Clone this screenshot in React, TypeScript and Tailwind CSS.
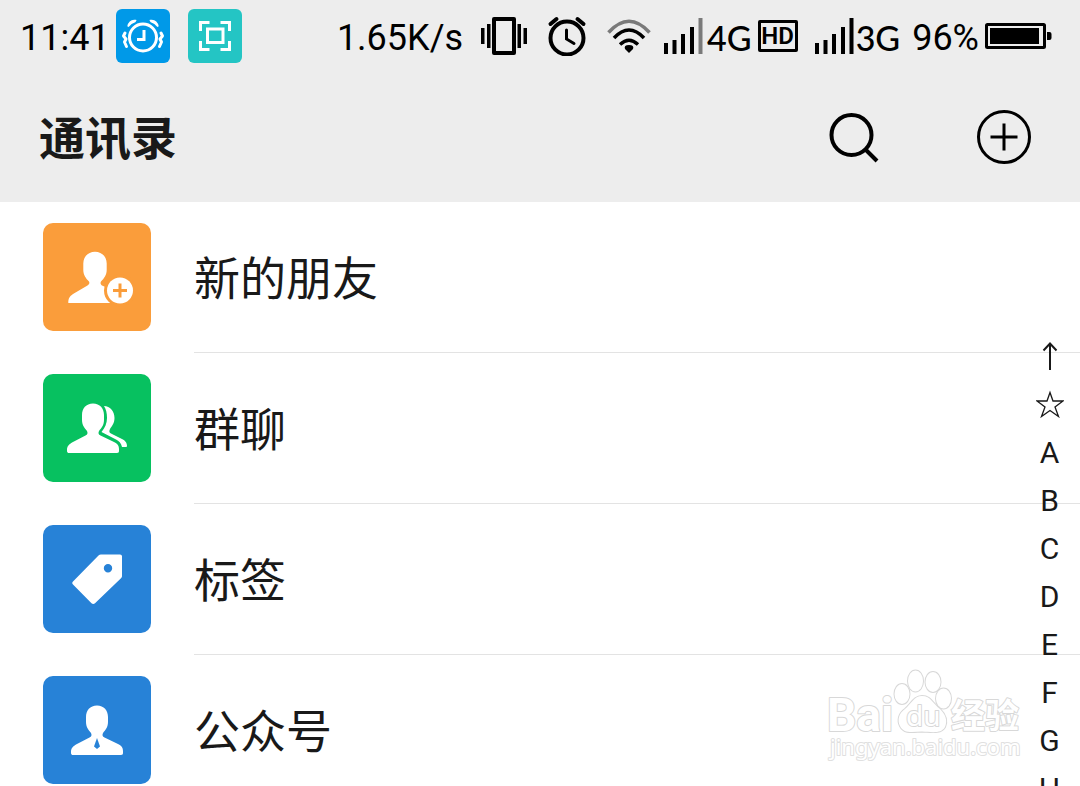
import type { ReactNode } from "react";

const iconSize = "size-[108px]";

function NewFriendIcon() {
  return (
    <svg viewBox="0 0 108 108" className={iconSize} fill="none" aria-hidden="true">
      <path
        fill="#fff"
        d="M52 28.700C45 28.700 40.300 34 40.300 40.500V47C40.300 52 43 55.500 46 58.500C46.800 60 46.300 61.500 44.500 62.500L30 71C26.500 73.500 25.300 75.500 25.300 80H67V66L59 62.500C57.500 61.500 57.200 60 58 58.500C61 55.500 63.700 52 63.700 47V40.500C63.700 34 59 28.700 52 28.700Z"
      />
      <path fill="#fff" d="M58 72h9v8h-9z" />
      <circle cx="77" cy="67.500" r="16" fill="#fa9d3b" />
      <circle cx="77" cy="67.500" r="13" fill="#fff" />
      <path stroke="#fa9d3b" strokeWidth="3" d="M70 67.500h14M77 60.500v14" />
    </svg>
  );
}

function GroupIcon() {
  return (
    <svg viewBox="0 0 108 108" className={iconSize} aria-hidden="true">
      <path
        fill="#fff"
        d="M61 32C67 32 71.500 37 71.500 44C71.500 49 69 52 67 55C66 57 66 58.500 68 59.500L79 65C83 67 84 69.500 84 72C84 73 83 73 82 73H79C78 69 76 67 73 65.500L58.500 58C62 54 64 49 64 44C64 39 63 35 61 32Z"
      />
      <path
        fill="#fff"
        d="M50 29.500C43 29.500 39 34.500 39 41V46C39 51 41.500 54 44 57C45 59 44.500 60.500 42.500 61.500L29 68.500C25 71 24 73 24 76V77C24 78.500 25 79 26 79H74C75.500 79 76 78 76 77V75C76 72 75 70 71 68L57.500 61.500C55.500 60.500 55 59 56 57C58.500 54 61 51 61 46V41C61 34.500 57 29.500 50 29.500Z"
      />
    </svg>
  );
}

function TagIcon() {
  return (
    <svg viewBox="0 0 108 108" className={iconSize} aria-hidden="true">
      <path
        fill="#fff"
        fillRule="evenodd"
        d="M58 29.500H77C78.200 29.500 79 30.300 79 31.500V51C79 52 78.600 52.600 78 53.200L52 78.200C51 79.200 49.500 79.200 48.500 78.200L30 59.500C29 58.500 29 57.500 30 56.500L55.500 30.500C56.200 29.800 57 29.500 58 29.500ZM65 39A4.200 4.200 0 1 0 65 47.400A4.200 4.200 0 1 0 65 39Z"
      />
    </svg>
  );
}

function OfficialIcon() {
  return (
    <svg viewBox="0 0 108 108" className={iconSize} aria-hidden="true">
      <path
        fill="#fff"
        d="M54 29.500C47 29.500 43 34.500 43 41V46C43 51 45.500 54 48 57C49 59 48.500 60.500 46.500 61.500L33 68.500C29 71 28 73 28 76V77C28 78.500 29 79 30 79H78C79.500 79 80 78 80 77V75C80 72 79 70 75 68L61.500 61.500C59.500 60.500 59 59 60 57C62.500 54 65 51 65 46V41C65 34.500 61 29.500 54 29.500Z"
      />
      <path fill="#2782d7" d="M54 62L51 70.500L54 73L57 70.500Z" />
    </svg>
  );
}

const entries: { label: string; color: string; icon: ReactNode }[] = [
  { label: "新的朋友", color: "bg-[#fa9d3b]", icon: <NewFriendIcon /> },
  { label: "群聊", color: "bg-[#07c160]", icon: <GroupIcon /> },
  { label: "标签", color: "bg-[#2782d7]", icon: <TagIcon /> },
  { label: "公众号", color: "bg-[#2782d7]", icon: <OfficialIcon /> },
];

const letters = ["A", "B", "C", "D", "E", "F", "G", "H"];

function SignalBars({ weak = false }: { weak?: boolean }) {
  return (
    <svg viewBox="0 0 40 36" className="h-9 w-10" aria-hidden="true">
      <path d="M1 25h4v11h-4zM9.500 22h4v14h-4zM18 16h4v20h-4zM27 9h4v27h-4z" />
      <path d="M35.500 0h4v36h-4z" fill={weak ? "#7a7a7a" : "#000"} />
    </svg>
  );
}

function StatusBar() {
  return (
    <div className="flex h-[72px] items-center justify-between pr-7 pl-5 text-[36px] leading-none whitespace-nowrap text-black">
      <div className="flex items-center">
        <time className="pt-1">11:41</time>
        <svg viewBox="0 0 54 54" className="ml-1.5 size-[54px] rounded-md bg-[#0099e8]" fill="none" stroke="#fff" strokeLinecap="round" aria-hidden="true">
          <circle cx="27" cy="28.500" r="13.500" strokeWidth="3" />
          <path strokeWidth="3" strokeLinecap="square" d="M28 22.500v8h-5.500" />
          <path fill="#fff" strokeWidth="1.500" d="M12 17.500C13 13 16 11 19.500 11.500L19 12.500C16 13.500 14 15 12 17.500ZM42 17.500C41 13 38 11 34.500 11.500L35 12.500C38 13.500 40 15 42 17.500Z" />
          <path strokeWidth="3" strokeLinejoin="round" d="M9 24l-1.500 3 2.500 3-1.500 3 2 4.500M45 24l1.500 3-2.500 3 1.500 3-2 4.500" />
        </svg>
        <svg viewBox="0 0 54 54" className="ml-[18px] size-[54px] rounded-md bg-[#24c5c4]" fill="none" stroke="#fff" strokeWidth="3" aria-hidden="true">
          <path d="M12.500 22v-8.500h9M32.500 13.500h9v8.500M41.500 32v8.500h-9M21.500 40.500h-9v-8.500" />
          <path d="M19.500 20h15.500v13.500h-15.500z" />
        </svg>
      </div>

      <div className="flex items-center">
        <span className="pt-1">1.65K/s</span>
        <svg viewBox="0 0 46 40" className="ml-[18px] h-10 w-[46px]" aria-hidden="true">
          <path d="M0 12h3.500v16h-3.500zM6 8h3.500v24h-3.500zM36.500 8h3.500v24h-3.500zM42.500 12h3.500v16h-3.500z" />
          <rect x="13" y="3" width="20" height="34" fill="none" stroke="#000" strokeWidth="4" strokeLinejoin="round" />
        </svg>
        <svg viewBox="0 0 40 40" className="ml-5 size-10" fill="none" stroke="#000" strokeWidth="4" strokeLinecap="round" aria-hidden="true">
          <circle cx="20" cy="22" r="16.500" />
          <path strokeWidth="3" d="M19.500 14v9l7.500 4.500" />
          <path d="M3.500 8l6-5M36.500 8l-6-5" />
        </svg>
        <svg viewBox="0 0 44 36" className="ml-5 h-9 w-11" fill="none" stroke="#000" strokeWidth="3.500" aria-hidden="true">
          <path stroke="#7a7a7a" d="M1.500 14.500Q22 -8 42.500 14.500" />
          <path d="M7 20Q22 4 37 20M13 26.500Q22 18 31 26.500" />
          <path fill="#000" stroke="none" d="M22 35l-4-4q-1.500-4 4-4t4 4z" />
        </svg>
        <div className="ml-3">
          <SignalBars weak />
        </div>
        <span className="ml-1 pt-1 font-['Lato',sans-serif] text-[34px] font-medium">4G</span>
        <span className="ml-1.5 flex h-8 w-10 items-center justify-center rounded-xs border-[3px] border-black text-[24px] font-semibold">HD</span>
        <div className="ml-4">
          <SignalBars />
        </div>
        <span className="ml-0.5 pt-1 font-['Lato',sans-serif] text-[34px] font-medium">3G</span>
        <span className="ml-3 pt-1">96%</span>
        <svg viewBox="0 0 67 26" className="ml-1.5 h-[26px] w-[67px]" aria-hidden="true">
          <rect x="1.500" y="1.500" width="58" height="23" rx="1" fill="none" stroke="#000" strokeWidth="3" />
          <path d="M5 5h49v16h-49zM62 9h2.500q2 0 2 2v4q0 2-2 2h-2.500z" />
        </svg>
      </div>
    </div>
  );
}

function Watermark() {
  return (
    <svg
      viewBox="0 0 200 100"
      className="pointer-events-none absolute right-[54px] bottom-[20px] h-[100px] w-[200px]"
      fill="#fff"
      stroke="#d8d8d8"
      strokeWidth="2"
      strokeLinejoin="round"
      paintOrder="stroke"
    >
      <text x="1" y="65" fontSize="46" fontWeight="700" fontFamily="Roboto, sans-serif">Bai</text>
      <g strokeWidth="2">
        <ellipse cx="76" cy="28" rx="7.500" ry="10" />
        <ellipse cx="89.500" cy="15" rx="7.500" ry="10.500" />
        <ellipse cx="107" cy="16" rx="7.500" ry="10" />
        <ellipse cx="117.500" cy="32.500" rx="7.500" ry="10" />
        <path d="M96 30C88 30 85 38 79 43C73 47 71 54 74 60C78 68 86 66 96 65.500C106 66 115 68 119 61C122 54 119 48 114 43C107 38 105 30 96 30Z" />
      </g>
      <text x="80" y="60" fontSize="28" fontWeight="400" fontFamily="Noto Sans, sans-serif">du</text>
      <text x="125" y="62" fontSize="34" fontWeight="700" fontFamily="Noto Sans CJK SC, sans-serif">经验</text>
      <text x="4" y="89" fontSize="22" fontWeight="400" stroke="#e0e0e0" fontFamily="Noto Sans, sans-serif">jingyan.baidu.com</text>
    </svg>
  );
}

export default function App() {
  return (
    <div className="relative flex h-screen flex-col overflow-hidden bg-white font-['Roboto','Noto_Sans_CJK_SC',sans-serif] text-[#191919]">
      <header className="shrink-0 bg-[#ededed]">
        <StatusBar />
        <div className="flex h-[130px] items-center justify-between pr-12 pl-[39px]">
          <h1 className="pt-1 text-[46px] leading-none font-bold">通讯录</h1>
          <div className="flex items-center gap-24 text-black">
            <button type="button" aria-label="搜索">
              <svg viewBox="0 0 52 56" className="h-14 w-[52px]" fill="none" stroke="currentColor" strokeWidth="4">
                <circle cx="23.500" cy="26" r="20" />
                <path d="M37.500 40.500l11.500 11.500" />
              </svg>
            </button>
            <button type="button" aria-label="添加">
              <svg viewBox="0 0 56 56" className="size-14" fill="none" stroke="currentColor" strokeWidth="3">
                <circle cx="28" cy="28" r="25.500" />
                <path d="M14.500 28h27M28 14.500v27" />
              </svg>
            </button>
          </div>
        </div>
      </header>

      <main className="relative min-h-0 flex-1 overflow-hidden">
        <ul>
          {entries.map(({ label, color, icon }) => (
            <li key={label}>
              <a href="#" className="flex items-start gap-[43px] pl-[43px]">
                <span className={`${color} mt-[21px] shrink-0 overflow-hidden rounded-[10px]`}>{icon}</span>
                <span className="flex h-[151px] flex-1 items-center border-b border-[#e3e3e3] pt-1 text-[46px] leading-none">
                  {label}
                </span>
              </a>
            </li>
          ))}
        </ul>

        <nav aria-label="索引" className="absolute top-[130px] right-0 flex w-[61px] flex-col text-[30px]">
          <a href="#" aria-label="顶部" className="flex h-12 items-center justify-center">
            <svg viewBox="0 0 28 28" className="size-7" fill="none" stroke="currentColor" strokeWidth="2">
              <path d="M14 28V1.500M7.500 8.500L14 1.500l6.500 7" />
            </svg>
          </a>
          <a href="#" aria-label="星标" className="flex h-12 items-center justify-center">
            <svg viewBox="0 0 28 28" className="size-7" fill="none" stroke="currentColor" strokeWidth="1.300">
              <path d="M14 2.500L17 11h10l-8 6 3.500 9.500L14 20.500 5.500 26.500 9 17 1 11h10z" />
            </svg>
          </a>
          {letters.map((letter) => (
            <a key={letter} href="#" className="flex h-12 items-center justify-center pt-0.5 leading-none">
              {letter}
            </a>
          ))}
        </nav>
      </main>

      <Watermark />
    </div>
  );
}
